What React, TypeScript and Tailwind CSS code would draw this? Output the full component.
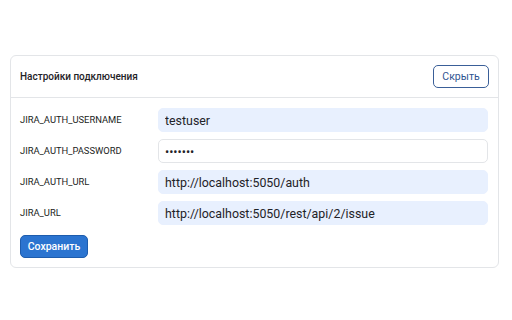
import React from "react";

const rows: { label: string; value: string; filled: boolean; type?: string }[] = [
  { label: "JIRA_AUTH_USERNAME", value: "testuser", filled: true },
  { label: "JIRA_AUTH_PASSWORD", value: "testpas", filled: false, type: "password" },
  { label: "JIRA_AUTH_URL", value: "http://localhost:5050/auth", filled: true },
  { label: "JIRA_URL", value: "http://localhost:5050/rest/api/2/issue", filled: true },
];

export default function App() {
  return (
    <div className="w-[512px] h-[320px] bg-white pt-[55px] pl-[10px]" style={{ fontFamily: "Roboto, 'Liberation Sans', sans-serif" }}>
      <div className="w-[489px] border border-[#e3e5e8] rounded-[6px] bg-white">
        <div className="flex items-center justify-between pl-[9px] pr-[9px] py-[9px] border-b border-[#e3e5e8]">
          <div className="text-[10px] font-medium text-[#1f2328]">Настройки подключения</div>
          <button className="h-[23px] w-[56px] rounded-[5px] border border-[#3a5f98] text-[10.5px] text-[#2f5490] bg-white">Скрыть</button>
        </div>
        <div className="pl-[9px] pr-[10px] pt-[10px] pb-[9px] flex flex-col gap-[7px]">
          {rows.map((r) => (
            <div key={r.label} className="flex items-center">
              <div className="w-[138px] text-[9.4px] text-[#1a1d21]">{r.label}</div>
              <input
                readOnly
                type={r.type ?? "text"}
                value={r.value}
                className={`flex-1 h-[24px] rounded-[5px] border px-[6px] text-[12.4px] text-[#1f2328] outline-none ${r.filled ? "bg-[#e8f0fe] border-[#e8f0fe]" : "bg-white border-[#e3e5e8]"}`}
                style={{ fontFamily: "Roboto, 'Liberation Sans', sans-serif" }}
              />
            </div>
          ))}
          <div className="pt-[1px]">
            <button className="h-[23px] w-[68px] rounded-[5px] border border-[#1d5cad] bg-[#2b74d0] text-white text-[10.5px] font-medium">Сохранить</button>
          </div>
        </div>
      </div>
    </div>
  );
}
